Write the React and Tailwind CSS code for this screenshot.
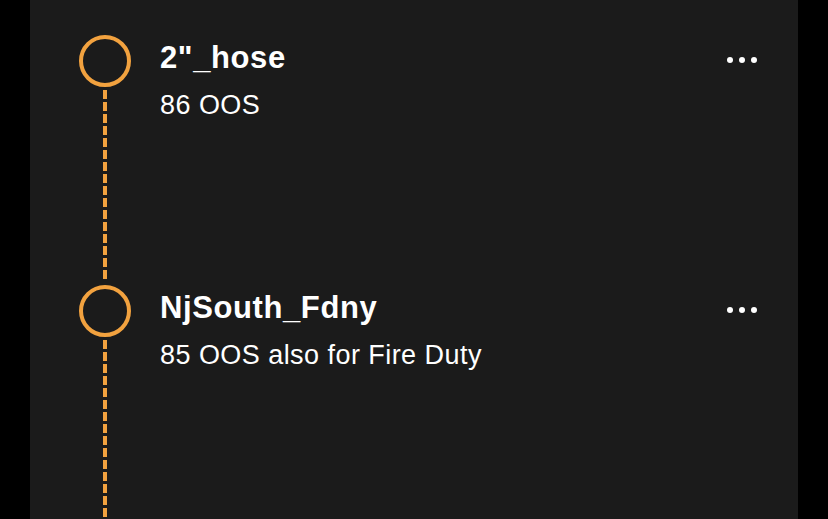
import React from 'react';

const items = [
  { title: '2"_hose', note: '86 OOS' },
  { title: 'NjSouth_Fdny', note: '85 OOS also for Fire Duty' },
];

const Dots = () => (
  <div className="flex items-center gap-[6px] mt-[4px]">
    <span className="w-[6px] h-[6px] rounded-full bg-white" />
    <span className="w-[6px] h-[6px] rounded-full bg-white" />
    <span className="w-[6px] h-[6px] rounded-full bg-white" />
  </div>
);

const Row = ({ title, note }) => (
  <div className="flex h-[250px] shrink-0 pl-[49px]">
    <div className="w-[52px] flex flex-col items-center">
      <div className="w-[52px] h-[52px] rounded-full border-4 border-[#f2a23f] shrink-0" />
      <div className="w-[4px] flex-1 my-[3px] bg-[repeating-linear-gradient(to_bottom,#f2a23f_0_9px,transparent_9px_12px)]" />
    </div>
    <div className="flex-1 pl-[29px] pr-[41px] pt-[5px]">
      <div className="flex items-center justify-between">
        <div className="text-[31px] leading-[36px] font-bold tracking-[0.6px] text-white">{title}</div>
        <Dots />
      </div>
      <div className="mt-[13px] text-[27px] leading-[32px] tracking-[0.45px] text-white">{note}</div>
    </div>
  </div>
);

export default function App() {
  return (
    <div className="h-[519px] bg-black flex justify-center overflow-hidden" style={{ fontFamily: '"Liberation Sans", Arial, sans-serif' }}>
      <div className="w-[768px] h-full bg-[#1b1b1b] flex flex-col pt-[35px] overflow-hidden">
        {items.map((it) => (
          <Row key={it.title} {...it} />
        ))}
      </div>
    </div>
  );
}
